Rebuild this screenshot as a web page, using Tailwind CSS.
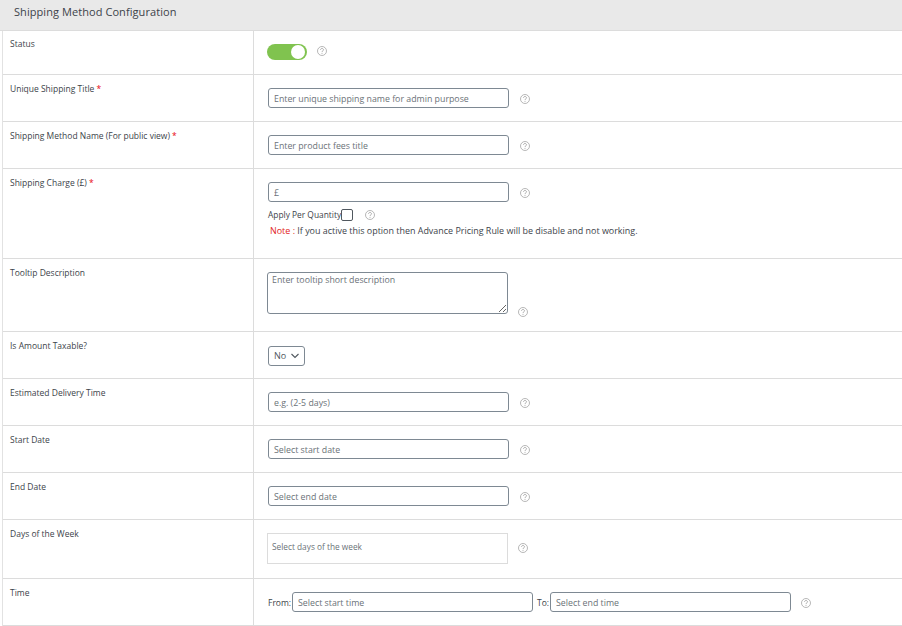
<!DOCTYPE html>
<html lang="en">
<head>
<meta charset="UTF-8">
<title>Shipping Method Configuration</title>
<script src="https://cdn.jsdelivr.net/npm/@tailwindcss/browser@4"></script>
</head>
<body class="bg-white overflow-hidden font-['Open_Sans',sans-serif] text-[8.5px] text-[#3c434a]">
<svg class="hidden"><symbol id="help" viewBox="0 0 10 10"><circle cx="5" cy="5" r="4.5" fill="none" stroke="currentColor" stroke-width="0.7"/><path d="M3.5 3.9c0-.9.7-1.4 1.5-1.4s1.5.5 1.5 1.3c0 1.1-1.5 1-1.5 2.2" fill="none" stroke="currentColor" stroke-width="0.8"/><circle cx="5" cy="7.3" r=".5" fill="currentColor"/></symbol></svg>

<div class="w-[902px] h-[626px]">
  <!-- heading -->
  <div class="h-[31px] bg-[#e9e9e9] border-b border-[#dcdcdc] pl-[14px] pt-[4px] text-[11px] tracking-[0.07px] text-[#3c434a]">Shipping Method Configuration</div>

  <div class="ml-[2px] border-l border-[#e2e2e2]">
    <!-- status -->
    <div class="flex h-[44px] border-b border-[#dcdcdc]">
      <div class="w-[251px] pl-[7px] pt-[7px] shrink-0 border-r border-[#dcdcdc]">Status</div>
      <div class="flex items-start pl-[13px] pt-[13px]">
        <div class="w-[40px] h-[16px] rounded-full bg-[#80c34f] flex justify-end items-center pr-[2px]"><div class="w-[14px] h-[14px] rounded-full bg-white"></div></div>
        <svg class="w-[10px] h-[10px] ml-[10px] mt-[2px] text-[#9a9a9a]"><use href="#help"/></svg>
      </div>
    </div>
    <!-- title -->
    <div class="flex h-[47px] border-b border-[#dcdcdc]">
      <div class="w-[251px] pl-[7px] pt-[8px] shrink-0 border-r border-[#dcdcdc]">Unique Shipping Title <span class="text-red-600">*</span></div>
      <div class="flex items-start pl-[14px] pt-[13px]">
        <input class="w-[241px] h-[20px] border border-[#7e8993] rounded-[3px] px-[5px] pt-[2px] text-[8.8px] placeholder:text-[#6b7278]" placeholder="Enter unique shipping name for admin purpose">
        <svg class="w-[10px] h-[10px] ml-[11px] mt-[6px] text-[#9a9a9a]"><use href="#help"/></svg>
      </div>
    </div>
    <!-- public name -->
    <div class="flex h-[47px] border-b border-[#dcdcdc]">
      <div class="w-[251px] pl-[7px] pt-[8px] shrink-0 border-r border-[#dcdcdc]">Shipping Method Name (For public view) <span class="text-red-600">*</span></div>
      <div class="flex items-start pl-[14px] pt-[13px]">
        <input class="w-[241px] h-[20px] border border-[#7e8993] rounded-[3px] px-[5px] pt-[2px] text-[8.8px] placeholder:text-[#6b7278]" placeholder="Enter product fees title">
        <svg class="w-[10px] h-[10px] ml-[11px] mt-[6px] text-[#9a9a9a]"><use href="#help"/></svg>
      </div>
    </div>
    <!-- charge -->
    <div class="flex h-[90px] border-b border-[#dcdcdc]">
      <div class="w-[251px] pl-[7px] pt-[8px] shrink-0 border-r border-[#dcdcdc]">Shipping Charge (£) <span class="text-red-600">*</span></div>
      <div class="pl-[14px] pt-[13px]">
        <div class="flex items-start">
          <input class="w-[241px] h-[20px] border border-[#7e8993] rounded-[3px] px-[5px] pt-[2px] text-[8.8px] placeholder:text-[#6b7278]" placeholder="£">
          <svg class="w-[10px] h-[10px] ml-[11px] mt-[6px] text-[#9a9a9a]"><use href="#help"/></svg>
        </div>
        <div class="flex items-center mt-[6px] h-[14px]">
          <span class="text-[8.4px]">Apply Per Quantity</span>
          <span class="w-[12px] h-[12px] border border-[#50575e] rounded-[2px] bg-white"></span>
          <svg class="w-[10px] h-[10px] ml-[12px] text-[#9a9a9a]"><use href="#help"/></svg>
        </div>
        <div class="ml-[2px] mt-[2px] text-[8.95px]"><span class="text-[#e2231a]">Note :</span> If you active this option then Advance Pricing Rule will be disable and not working.</div>
      </div>
    </div>
    <!-- tooltip -->
    <div class="flex h-[73px] border-b border-[#dcdcdc]">
      <div class="w-[251px] pl-[7px] pt-[8px] shrink-0 border-r border-[#dcdcdc]">Tooltip Description</div>
      <div class="flex items-start pl-[13px] pt-[13px]">
        <textarea class="w-[241px] h-[42px] border border-[#7e8993] rounded-[3px] px-[4px] pt-[1px] text-[8.8px] placeholder:text-[#6b7278]" placeholder="Enter tooltip short description"></textarea>
        <svg class="w-[10px] h-[10px] ml-[10px] mt-[35px] text-[#9a9a9a]"><use href="#help"/></svg>
      </div>
    </div>
    <!-- taxable -->
    <div class="flex h-[47px] border-b border-[#dcdcdc]">
      <div class="w-[251px] pl-[7px] pt-[8px] shrink-0 border-r border-[#dcdcdc]">Is Amount Taxable?</div>
      <div class="pl-[14px] pt-[14px]">
        <div class="w-[37px] h-[20px] border border-[#7e8993] rounded-[3px] flex items-center pl-[5px] text-[9px] text-[#50575e]">No
          <svg class="w-[10px] h-[10px] ml-[4px]" viewBox="0 0 10 10"><path d="M1.5 3 5 6.5 8.5 3" fill="none" stroke="#50575e" stroke-width="1.1"/></svg>
        </div>
      </div>
    </div>
    <!-- delivery -->
    <div class="flex h-[47px] border-b border-[#dcdcdc]">
      <div class="w-[251px] pl-[7px] pt-[8px] shrink-0 border-r border-[#dcdcdc]">Estimated Delivery Time</div>
      <div class="flex items-start pl-[14px] pt-[13px]">
        <input class="w-[241px] h-[20px] border border-[#7e8993] rounded-[3px] px-[5px] pt-[2px] text-[8.8px] placeholder:text-[#6b7278]" placeholder="e.g. (2-5 days)">
        <svg class="w-[10px] h-[10px] ml-[11px] mt-[6px] text-[#9a9a9a]"><use href="#help"/></svg>
      </div>
    </div>
    <!-- start -->
    <div class="flex h-[47px] border-b border-[#dcdcdc]">
      <div class="w-[251px] pl-[7px] pt-[8px] shrink-0 border-r border-[#dcdcdc]">Start Date</div>
      <div class="flex items-start pl-[14px] pt-[13px]">
        <input class="w-[241px] h-[20px] border border-[#7e8993] rounded-[3px] px-[5px] pt-[2px] text-[8.8px] placeholder:text-[#6b7278]" placeholder="Select start date">
        <svg class="w-[10px] h-[10px] ml-[11px] mt-[6px] text-[#9a9a9a]"><use href="#help"/></svg>
      </div>
    </div>
    <!-- end -->
    <div class="flex h-[47px] border-b border-[#dcdcdc]">
      <div class="w-[251px] pl-[7px] pt-[8px] shrink-0 border-r border-[#dcdcdc]">End Date</div>
      <div class="flex items-start pl-[14px] pt-[13px]">
        <input class="w-[241px] h-[20px] border border-[#7e8993] rounded-[3px] px-[5px] pt-[2px] text-[8.8px] placeholder:text-[#6b7278]" placeholder="Select end date">
        <svg class="w-[10px] h-[10px] ml-[11px] mt-[6px] text-[#9a9a9a]"><use href="#help"/></svg>
      </div>
    </div>
    <!-- days -->
    <div class="flex h-[59px] border-b border-[#dcdcdc]">
      <div class="w-[251px] pl-[7px] pt-[8px] shrink-0 border-r border-[#dcdcdc]">Days of the Week</div>
      <div class="flex items-start pl-[13px] pt-[13px]">
        <div class="w-[241px] h-[31px] border border-[#dcdcdc] pl-[4px] pt-[7px] text-[8.3px] text-[#6b7278]">Select days of the week</div>
        <svg class="w-[10px] h-[10px] ml-[10px] mt-[10px] text-[#9a9a9a]"><use href="#help"/></svg>
      </div>
    </div>
    <!-- time -->
    <div class="flex h-[47px] border-b border-[#dcdcdc]">
      <div class="w-[251px] pl-[7px] pt-[8px] shrink-0 border-r border-[#dcdcdc]">Time</div>
      <div class="flex items-start pl-[14px] pt-[13px]">
        <span class="mt-[5px] w-[24px]">From:</span>
        <input class="w-[241px] h-[20px] border border-[#7e8993] rounded-[3px] px-[5px] pt-[2px] text-[8.8px] placeholder:text-[#6b7278]" placeholder="Select start time">
        <span class="mt-[5px] ml-[4px] w-[13px]">To:</span>
        <input class="w-[241px] h-[20px] border border-[#7e8993] rounded-[3px] px-[5px] pt-[2px] text-[8.8px] placeholder:text-[#6b7278]" placeholder="Select end time">
        <svg class="w-[10px] h-[10px] ml-[10px] mt-[6px] text-[#9a9a9a]"><use href="#help"/></svg>
      </div>
    </div>
  </div>
</div>
</body>
</html>
